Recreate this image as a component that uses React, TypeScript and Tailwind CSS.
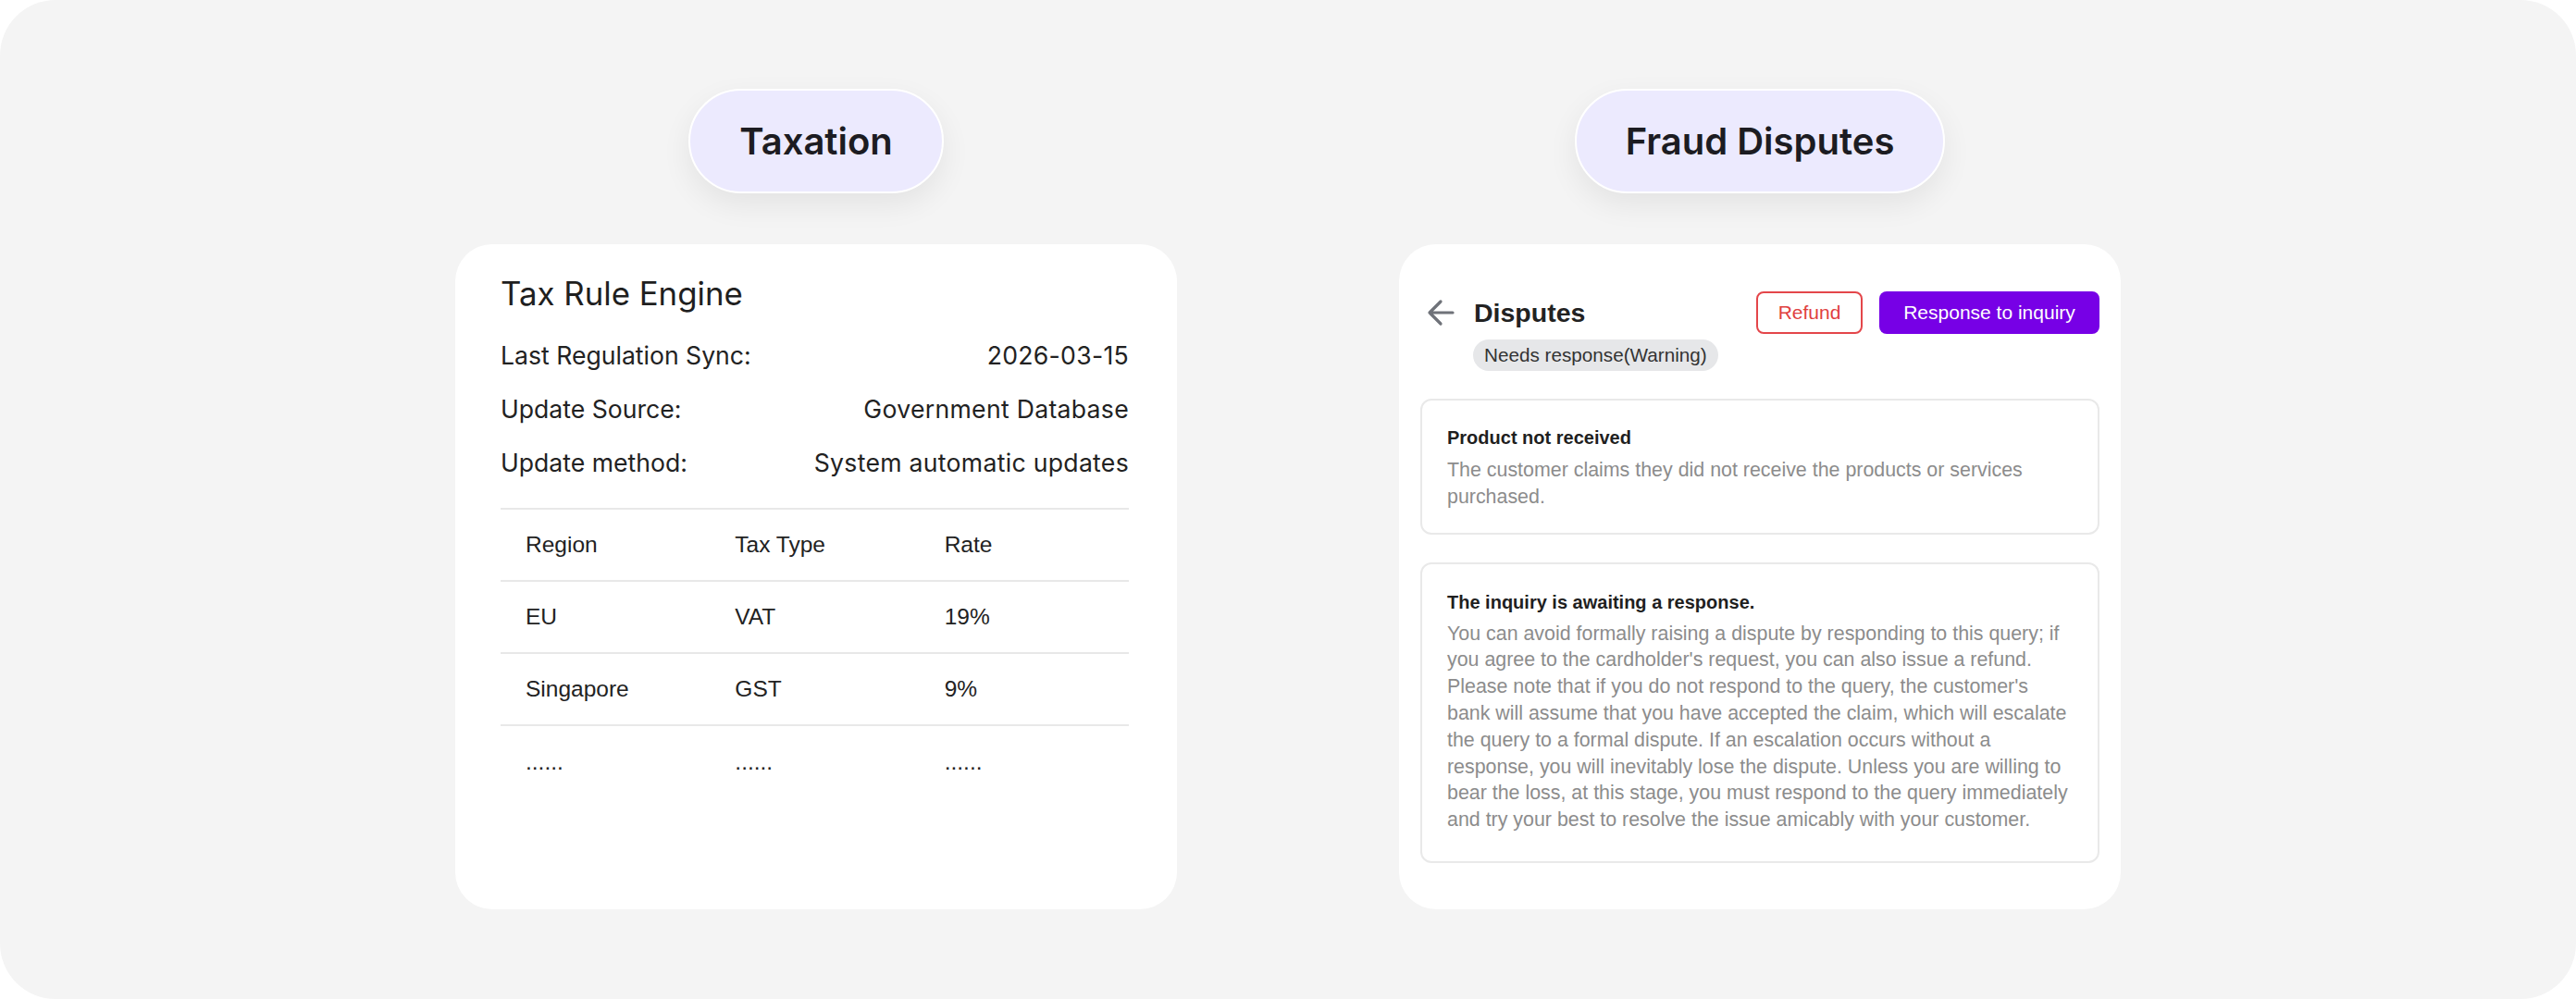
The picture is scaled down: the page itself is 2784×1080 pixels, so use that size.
import { ReactNode } from "react";

const sans = "font-['Inter',sans-serif]";
const ui = "font-['Liberation_Sans',Arial,sans-serif]";

function Pill({ children }: { children: ReactNode }) {
  return (
    <div
      className={`${sans} h-[113px] px-[53px] flex items-center justify-center rounded-full border-2 border-white bg-[#eceafe] text-[40px] font-semibold text-[#1c1c22] shadow-[0_12px_32px_rgba(0,0,0,0.07)]`}
    >
      {children}
    </div>
  );
}

function TaxCard() {
  const info = [
    ["Last Regulation Sync:", "2026-03-15"],
    ["Update Source:", "Government Database"],
    ["Update method:", "System automatic updates"],
  ];
  const rows = [
    ["Region", "Tax Type", "Rate"],
    ["EU", "VAT", "19%"],
    ["Singapore", "GST", "9%"],
    ["......", "......", "......"],
  ];

  return (
    <div className="w-[780px] h-[719px] rounded-[40px] bg-white pl-[49px] pr-[52px] pt-[33px]">
      <div className={`${sans} text-[34.8px] leading-[41px] text-[#1f1f1f]`}>Tax Rule Engine</div>
      <div className="mt-[17px]">
        {info.map(([label, value]) => (
          <div key={label} className={`${sans} flex justify-between text-[26.6px] leading-[58px] text-[#222]`}>
            <span>{label}</span>
            <span className="tracking-[0.3px]">{value}</span>
          </div>
        ))}
      </div>
      <div className="mt-[20px] border-t-2 border-[#e8e8e8]">
        {rows.map((r, i) => (
          <div
            key={i}
            className={`${ui} grid grid-cols-3 h-[78px] items-center text-[24.5px] text-[#222] ${
              i < rows.length - 1 ? "border-b-2 border-[#e8e8e8]" : ""
            }`}
          >
            {r.map((c, j) => (
              <span key={j} className="pl-[27px]">
                {c}
              </span>
            ))}
          </div>
        ))}
      </div>
    </div>
  );
}

function InfoBox({ title, lines, className }: { title: string; lines: string[]; className: string }) {
  return (
    <div className={`rounded-[12px] border-2 border-[#e9e9e9] px-[27px] ${className}`}>
      <div className={`${ui} text-[20px] leading-[28px] font-bold text-[#1f1f1f]`}>{title}</div>
      <div className={`${ui} text-[21.4px] leading-[28.8px] text-[#8c8c8c]`}>
        {lines.map((l, i) => (
          <div key={i} className="whitespace-nowrap">
            {l}
          </div>
        ))}
      </div>
    </div>
  );
}

function DisputesCard() {
  return (
    <div className="w-[780px] h-[719px] rounded-[40px] bg-white px-[23px] pt-[51px]">
      <div className="flex items-center h-[46px]">
        <svg width="30" height="30" viewBox="0 0 30 30" fill="none" className="ml-[7px]">
          <path
            d="M28 15H3M15 3L3 15l12 12"
            stroke="#6f7279"
            strokeWidth="3.2"
            strokeLinecap="round"
            strokeLinejoin="round"
          />
        </svg>
        <span className={`${ui} ml-[21px] text-[28.5px] font-bold text-[#222]`}>Disputes</span>
        <div className="ml-auto flex gap-[18px]">
          <button
            className={`${ui} w-[115px] h-[46px] rounded-[8px] border-2 border-[#e4464a] text-[21px] text-[#e0403f]`}
          >
            Refund
          </button>
          <button
            className={`${ui} w-[238px] h-[46px] rounded-[8px] bg-[#7700e6] text-[21px] text-white`}
          >
            Response to inquiry
          </button>
        </div>
      </div>
      <div className="mt-[6px] ml-[57px]">
        <span
          className={`${ui} inline-flex items-center h-[34px] px-[12px] rounded-full bg-[#e6e7e9] text-[20.7px] text-[#333]`}
        >
          Needs response(Warning)
        </span>
      </div>
      <InfoBox
        className="mt-[30px] pt-[26px] pb-[24px] [&>div:nth-child(2)]:mt-[7px]"
        title="Product not received"
        lines={["The customer claims they did not receive the products or services", "purchased."]}
      />
      <InfoBox
        className="mt-[30px] pt-[27px] pb-[30px] [&>div:nth-child(2)]:mt-[6px]"
        title="The inquiry is awaiting a response."
        lines={[
          "You can avoid formally raising a dispute by responding to this query; if",
          "you agree to the cardholder's request, you can also issue a refund.",
          "Please note that if you do not respond to the query, the customer's",
          "bank will assume that you have accepted the claim, which will escalate",
          "the query to a formal dispute. If an escalation occurs without a",
          "response, you will inevitably lose the dispute. Unless you are willing to",
          "bear the loss, at this stage, you must respond to the query immediately",
          "and try your best to resolve the issue amicably with your customer.",
        ]}
      />
    </div>
  );
}

export default function App() {
  return (
    <div className="w-[2784px] h-[1080px] bg-white">
      <div className="w-full h-full rounded-[60px] bg-[#f4f4f4] flex justify-center gap-[240px] pt-[96px]">
        <div className="flex flex-col items-center">
          <Pill>Taxation</Pill>
          <div className="mt-[55px]">
            <TaxCard />
          </div>
        </div>
        <div className="flex flex-col items-center">
          <Pill>Fraud Disputes</Pill>
          <div className="mt-[55px]">
            <DisputesCard />
          </div>
        </div>
      </div>
    </div>
  );
}
